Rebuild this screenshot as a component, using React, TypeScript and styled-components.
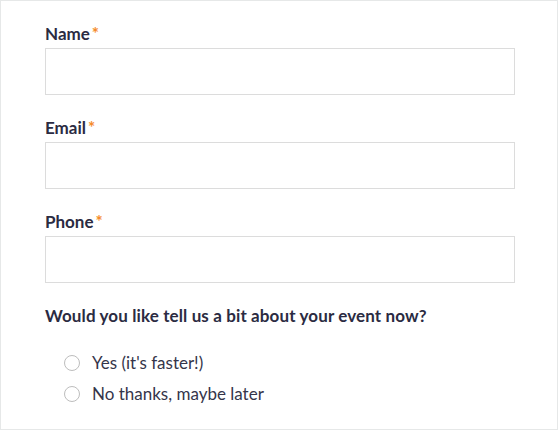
import * as React from "react";
import styled, { createGlobalStyle } from "styled-components";

const GlobalStyle = createGlobalStyle`
  html, body {
    margin: 0;
    padding: 0;
    background: #ffffff;
  }
  body {
    font-family: Lato, "Open Sans", sans-serif;
    color: #2c2c40;
  }
`;

const fields = [
  { label: "Name", name: "name", type: "text" },
  { label: "Email", name: "email", type: "email" },
  { label: "Phone", name: "phone", type: "tel" },
];

const options = ["Yes (it's faster!)", "No thanks, maybe later"];

const App = () => {
  const [choice, setChoice] = React.useState<string | null>(null);

  return (
    <>
      <GlobalStyle />
      <StyledForm onSubmit={(e) => e.preventDefault()}>
        {fields.map((field) => (
          <Field key={field.name}>
            <Label htmlFor={field.name}>
              {field.label}
              <Required>*</Required>
            </Label>
            <Input id={field.name} name={field.name} type={field.type} />
          </Field>
        ))}

        <Question>Would you like tell us a bit about your event now?</Question>

        <Options>
          {options.map((option) => (
            <Option key={option}>
              <Radio
                type="radio"
                name="details"
                checked={choice === option}
                onChange={() => setChoice(option)}
              />
              {option}
            </Option>
          ))}
        </Options>
      </StyledForm>
    </>
  );
};

const StyledForm = styled.form`
  box-sizing: border-box;
  width: 558px;
  height: 430px;
  border: 1px solid #e6e8e8;
  padding: 22px 43px 0 44px;
`;

const Field = styled.div`
  display: flex;
  flex-direction: column;
  gap: 4px;
  margin-bottom: 22px;
`;

const Label = styled.label`
  font-size: 17px;
  line-height: 21px;
  font-weight: 700;
  color: #2b2b42;
`;

const Required = styled.span`
  color: #f58b2a;
  margin-left: 2px;
`;

const Input = styled.input`
  box-sizing: border-box;
  width: 470px;
  height: 47px;
  border: 1px solid #dcdcdc;
  border-radius: 0;
  padding: 0 12px;
  font: inherit;
  outline: none;
`;

const Question = styled.p`
  margin: 0;
  font-size: 17px;
  line-height: 21px;
  font-weight: 700;
  letter-spacing: 0.12px;
  color: #2b2b42;
`;

const Options = styled.div`
  display: flex;
  flex-direction: column;
  gap: 10px;
  margin-top: 26px;
  padding-left: 19px;
`;

const Option = styled.label`
  display: flex;
  align-items: center;
  gap: 12px;
  font-size: 17px;
  line-height: 21px;
  color: #35354a;
  cursor: pointer;
`;

const Radio = styled.input`
  appearance: none;
  box-sizing: border-box;
  width: 16px;
  height: 16px;
  margin: 0;
  border: 1px solid #bdbdbd;
  border-radius: 50%;
  background: #fff;

  &:checked {
    border: 5px solid #f58b2a;
  }
`;

export default App;
